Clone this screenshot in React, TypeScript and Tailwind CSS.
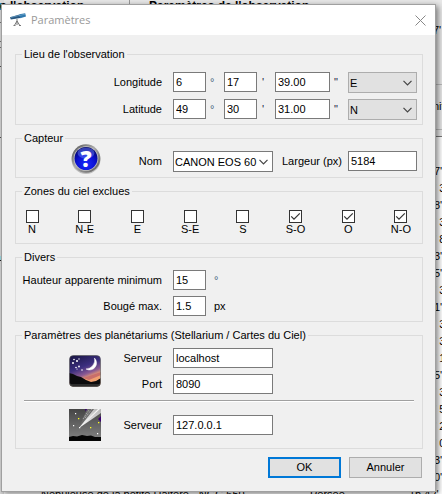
import type { ReactNode } from "react";

const rows = ["7'", "' 3", "8'", "' 3", "' 8", "3'", "5'", "' 3", "1'", "' 3", "' 3", "' 1", "5'", "' 3", "' 5", "' 2", "' 0", "3'", "0'"];

function CatalogueWindow() {
  return (
    <div className="absolute inset-0 overflow-hidden bg-white leading-[17px] whitespace-nowrap" aria-hidden="true">
      <div className="absolute inset-x-0 top-0 h-[137px] border-b border-[#777777] bg-[#e8e8e8]" />
      <div className="absolute top-0 left-0 h-full w-1 bg-[#dcdcdc]" />
      <div className="absolute top-[3px] left-0 h-[7px] w-[2px] bg-[#2f86d0]" />
      <div className="absolute top-[22px] left-0 h-px w-1 bg-[#777777]" />
      <div className="absolute top-[41px] left-0 h-px w-1 bg-[#777777]" />
      <div className="absolute top-[47px] left-0 h-px w-1 bg-[#777777]" />
      <div className="absolute top-[66px] left-0 h-px w-1 bg-[#555555]" />
      <div className="absolute top-[137px] left-0 h-px w-1 bg-[#555555]" />
      <div className="absolute top-[256px] left-0 h-[4px] w-1 bg-[#9fdfe8]" />
      <div className="absolute top-[260px] left-0 h-px w-1 bg-[#222222]" />
      <div className="absolute -top-px left-0 text-[12px] leading-[14px] font-bold">e l'observation</div>
      <div className="absolute top-0 left-[129px] h-1 w-px bg-[#999999]" />
      <div className="absolute -top-px left-[149px] text-[12px] leading-[14px] font-bold">Paramètres de l'observation</div>
      <div className="absolute top-[22px] left-[433px]">7'</div>
      <div className="absolute top-[84px] right-0 h-px w-2 bg-[#bbbbbb]" />
      <div className="absolute top-[98px] left-[433px]">nit</div>
      <div className="absolute top-[129px] right-0 h-px w-2 bg-[#bbbbbb]" />
      <div className="absolute top-[163px] left-[434px]">
        {rows.map((r, i) => (
          <div key={i}>{r}</div>
        ))}
      </div>
      <div className="absolute top-[486px] left-[41px]">Nébuleuse de la petite Haltère - NGC 650</div>
      <div className="absolute top-[486px] left-[310px]">Persée</div>
      <div className="absolute top-[486px] left-[409px]">1h 42'</div>
    </div>
  );
}

function TelescopeIcon() {
  return (
    <svg width="16" height="14" viewBox="0 0 16 14" aria-hidden="true">
      <path d="M0 4.2 9.5 1.6 10.2 5 0.8 6.4z" fill="#27567f" />
      <path d="M9.3 1.2 15.2 0.2 16 3.4 10.2 5.2z" fill="#2f78ad" />
      <path d="M1 4.4 15 1.2" stroke="#6fa8cf" strokeWidth="0.7" />
      <path d="M7 6v3M7 8 4.4 12.5M7 8l2.8 4.5M7 8v4M3.5 12.5h2M9 12.5h2" stroke="#777777" strokeWidth="1" fill="none" />
    </svg>
  );
}

function HelpIcon() {
  return (
    <svg width="32" height="32" viewBox="0 0 32 32" aria-hidden="true">
      <defs>
        <linearGradient id="ring" x1="0" y1="0" x2="1" y2="1">
          <stop offset="0" stopColor="#4c4c4c" />
          <stop offset="0.45" stopColor="#aaaaaa" />
          <stop offset="1" stopColor="#555555" />
        </linearGradient>
        <radialGradient id="ball" cx="0.5" cy="0.75" r="0.75">
          <stop offset="0" stopColor="#1c2cff" />
          <stop offset="0.55" stopColor="#0a10d0" />
          <stop offset="1" stopColor="#02055c" />
        </radialGradient>
      </defs>
      <circle cx="17" cy="16.5" r="14.5" fill="#bdbdbd" />
      <circle cx="17" cy="15.5" r="14.3" fill="url(#ring)" />
      <circle cx="17" cy="15.5" r="12.3" fill="#c4c4c4" />
      <circle cx="17" cy="15.5" r="11.5" fill="url(#ball)" />
      <ellipse cx="17" cy="10" rx="8.5" ry="5.5" fill="#6f86ff" opacity="0.45" />
      <text x="17" y="23.5" textAnchor="middle" fontFamily="Open Sans, sans-serif" fontWeight="800" fontSize="22" fill="#ffffff">?</text>
    </svg>
  );
}

function StellariumIcon() {
  return (
    <svg width="32" height="32" viewBox="0 0 32 32" aria-hidden="true">
      <defs>
        <linearGradient id="dusk" x1="0.2" y1="0" x2="0.6" y2="1">
          <stop offset="0" stopColor="#1b1747" />
          <stop offset="0.4" stopColor="#3c2f80" />
          <stop offset="0.62" stopColor="#8a5a93" />
          <stop offset="0.76" stopColor="#f0a070" />
        </linearGradient>
        <clipPath id="tile"><rect x="0.5" y="0.5" width="31" height="31" rx="4" /></clipPath>
      </defs>
      <g clipPath="url(#tile)">
        <rect width="32" height="32" fill="url(#dusk)" />
        <path d="M14 23 32 17v3L20 25z" fill="#c96f6a" />
        <path d="M0 18 4 19 8 21 12 22 17 25 22 27 27 26 32 23V32H0z" fill="#0b0b0d" />
        <path d="M0 29h32v3H0z" fill="#2b2b2b" />
        <path d="M25.5 3A7 7 0 0 1 17 14A9 9 0 0 0 25.5 3z" fill="#ffffff" stroke="#ffffff" strokeWidth="0.5" />
        <g fill="#ffffff">
          <circle cx="5" cy="4.5" r="0.8" /><circle cx="8" cy="6" r="1" /><circle cx="4" cy="8" r="1" />
          <circle cx="10" cy="4" r="0.7" /><circle cx="7" cy="12.5" r="0.8" /><circle cx="10" cy="11.5" r="0.9" />
          <circle cx="13" cy="15" r="0.8" /><circle cx="8" cy="14" r="0.6" />
        </g>
      </g>
      <rect x="0.5" y="0.5" width="31" height="31" rx="4" fill="none" stroke="#555555" strokeOpacity="0.6" />
    </svg>
  );
}

function CometIcon() {
  return (
    <svg width="32" height="32" viewBox="0 0 32 32" aria-hidden="true">
      <defs>
        <linearGradient id="night" x1="0" y1="0" x2="0" y2="1">
          <stop offset="0" stopColor="#454545" />
          <stop offset="1" stopColor="#858585" />
        </linearGradient>
        <linearGradient id="tail" x1="0" y1="1" x2="1" y2="0">
          <stop offset="0" stopColor="#ffffff" />
          <stop offset="1" stopColor="#b4b4b4" />
        </linearGradient>
      </defs>
      <rect width="32" height="32" fill="url(#night)" />
      <path d="M16 0h3l-2 3zM32 7v6l-3-3z" fill="#3a0070" />
      <path d="M10 19 18 0h7z" fill="#6a6a6a" />
      <path d="M14 10 20 1M16 9 23 0" stroke="#dddddd" strokeWidth="0.7" strokeDasharray="1 1" />
      <path d="M10 19 25 0h7v4z" fill="url(#tail)" />
      <path d="M10 19 29 0h2z" fill="#f5f5f5" />
      <path d="M0 28 4 27 8 27.5 13 26 18 27 22 26.5 26 28 32 28V32H0z" fill="#050505" />
      <path d="M9 9h1.3v1.3H9zM29 13h1.3v1.3H29zM21 18h1.3v1.3H21z" fill="#ffff20" />
      <path d="M6 4h1.2v1.2H6zM4 16h1.2v1.2H4zM28 24h1.2v1.2H28zM10 18h1.3v1.3H10z" fill="#ffffff" />
    </svg>
  );
}

function Group({ title, className, children }: { title: string; className: string; children: ReactNode }) {
  return (
    <fieldset className={`min-w-0 border border-[#dcdcdc] ${className}`}>
      <legend className="ml-[6px] px-[2px] leading-[13px]">{title}</legend>
      {children}
    </fieldset>
  );
}

function TextBox({ id, value, width, label }: { id: string; value: string; width: string; label?: string }) {
  return (
    <input
      id={id}
      type="text"
      defaultValue={value}
      aria-label={label}
      className={`h-5 shrink-0 border border-[#7a7a7a] bg-white px-[2px] outline-none ${width}`}
    />
  );
}

function Combo({ id, value, look, label }: { id: string; value: string; look: string; label?: string }) {
  return (
    <div className={`relative h-[21px] shrink-0 border ${look}`}>
      <select id={id} defaultValue={value} aria-label={label} className="block h-full w-full appearance-none bg-transparent pl-px outline-none">
        <option>{value}</option>
      </select>
      <svg className="pointer-events-none absolute top-[7px] right-1" width="9" height="6" viewBox="0 0 9 6" aria-hidden="true">
        <path d="M0.5 0.8 4.5 4.8 8.5 0.8" fill="none" stroke="#444444" strokeWidth="1.2" />
      </svg>
    </div>
  );
}

function Label({ htmlFor, children }: { htmlFor: string; children: ReactNode }) {
  return (
    <label htmlFor={htmlFor} className="w-[146px] shrink-0 text-right whitespace-nowrap">
      {children}
    </label>
  );
}

function Coordinate({ name, id, deg, min, sec, dir }: { name: string; id: string; deg: string; min: string; sec: string; dir: string }) {
  return (
    <div className="flex h-[21px] items-start leading-5">
      <Label htmlFor={id}>{name}</Label>
      <span className="w-[11px]" />
      <TextBox id={id} value={deg} width="w-[33px]" />
      <span className="w-[18px] pl-1 text-[#44607a]">°</span>
      <TextBox id={`${id}-min`} value={min} width="w-[33px]" label={`${name} minutes`} />
      <span className="w-[18px] pl-[5px] text-[#222244]">'</span>
      <TextBox id={`${id}-sec`} value={sec} width="w-[55px]" label={`${name} secondes`} />
      <span className="w-[18px] pl-1 text-[#222244]">"</span>
      <Combo id={`${id}-dir`} value={dir} label={`${name} direction`} look="w-[69px] border-[#adadad] bg-[#e1e1e1]" />
    </div>
  );
}

function Zone({ name, checked }: { name: string; checked: boolean }) {
  return (
    <label className="flex w-6 flex-col items-center leading-[13px]">
      <span className="relative h-[13px] w-[13px]">
        <input type="checkbox" defaultChecked={checked} className="peer block h-[13px] w-[13px] appearance-none border border-[#333333] bg-white" />
        <svg className="pointer-events-none absolute inset-0 hidden peer-checked:block" width="13" height="13" viewBox="0 0 13 13" aria-hidden="true">
          <path d="M2.2 6.3 5 9.2 10.8 3.3" fill="none" stroke="#333333" strokeWidth="1.2" />
        </svg>
      </span>
      <span className="whitespace-nowrap">{name}</span>
    </label>
  );
}

function PlanetariumFields({ children }: { children: ReactNode }) {
  return <div className="flex flex-col gap-[6px] leading-5">{children}</div>;
}

function ServerField({ id, name, value }: { id: string; name: string; value: string }) {
  return (
    <div className="flex gap-[11px]">
      <label htmlFor={id} className="w-[61px] text-right">{name}</label>
      <TextBox id={id} value={value} width="w-[100px]" />
    </div>
  );
}

export default function App() {
  return (
    <div className="relative overflow-hidden pt-1 pr-[6px] pb-[2px] pl-px font-['Liberation_Sans',sans-serif] text-[11px] text-black">
      <CatalogueWindow />
      <div role="dialog" aria-labelledby="title" className="relative border border-[#a0a0a0] bg-[#f0f0f0] shadow-[2px_2px_6px_rgba(0,0,0,0.5)]">
        <header className="flex h-[30px] items-center bg-white pr-[9px] pl-2">
          <TelescopeIcon />
          <h1 id="title" className="flex-1 pl-[5px] font-['Open_Sans',sans-serif] text-[11px] text-[#999999]">Paramètres</h1>
          <button type="button" aria-label="Fermer">
            <svg width="11" height="11" viewBox="0 0 11 11" aria-hidden="true">
              <path d="M0.5 0.5 10.5 10.5M10.5 0.5 0.5 10.5" stroke="#888888" strokeWidth="1" />
            </svg>
          </button>
        </header>

        <form className="flex flex-col gap-[7px] pt-[13px] pr-3 pb-[13px] pl-[13px]">
          <Group title="Lieu de l'observation" className="pt-[11px] pb-1">
            <div className="flex flex-col gap-[6px]">
              <Coordinate name="Longitude" id="longitude" deg="6" min="17" sec="39.00" dir="E" />
              <Coordinate name="Latitude" id="latitude" deg="49" min="30" sec="31.00" dir="N" />
            </div>
          </Group>

          <Group title="Capteur" className="pt-[6px] pb-[5px]">
            <div className="flex h-[21px] items-start leading-5">
              <span className="-my-2 ml-[53px]"><HelpIcon /></span>
              <label htmlFor="capteur" className="w-[61px] text-right">Nom</label>
              <span className="w-[11px]" />
              <Combo id="capteur" value="CANON EOS 60" look="w-[100px] border-[#7a7a7a] bg-white" />
              <label htmlFor="largeur" className="w-[75px] pl-[9px] whitespace-nowrap">Largeur (px)</label>
              <TextBox id="largeur" value="5184" width="w-[69px]" />
            </div>
          </Group>

          <Group title="Zones du ciel exclues" className="pt-3 pb-[7px]">
            <div className="flex justify-between pr-[9px] pl-1">
              <Zone name="N" checked={false} />
              <Zone name="N-E" checked={false} />
              <Zone name="E" checked={false} />
              <Zone name="S-E" checked={false} />
              <Zone name="S" checked={false} />
              <Zone name="S-O" checked />
              <Zone name="O" checked />
              <Zone name="N-O" checked />
            </div>
          </Group>

          <Group title="Divers" className="pt-[6px] pb-[5px]">
            <div className="flex flex-col gap-[6px] leading-5">
              <div className="flex">
                <Label htmlFor="hauteur">Hauteur apparente minimum</Label>
                <span className="w-[11px]" />
                <TextBox id="hauteur" value="15" width="w-[33px]" />
                <span className="pl-2 text-[#44607a]">°</span>
              </div>
              <div className="flex">
                <Label htmlFor="bouge">Bougé max.</Label>
                <span className="w-[11px]" />
                <TextBox id="bouge" value="1.5" width="w-[33px]" />
                <span className="pl-2">px</span>
              </div>
            </div>
          </Group>

          <Group title="Paramètres des planétariums (Stellarium / Cartes du Ciel)" className="pt-[6px] pb-[13px]">
            <div className="flex items-center pl-[53px]">
              <StellariumIcon />
              <PlanetariumFields>
                <ServerField id="stellarium-serveur" name="Serveur" value="localhost" />
                <ServerField id="stellarium-port" name="Port" value="8090" />
              </PlanetariumFields>
            </div>
            <hr className="mx-2 mt-[6px] mb-[13px] h-[2px] border-t border-b border-t-[#a0a0a0] border-b-white" />
            <div className="flex h-5 items-center pl-[53px]">
              <CometIcon />
              <PlanetariumFields>
                <ServerField id="carte-serveur" name="Serveur" value="127.0.0.1" />
              </PlanetariumFields>
            </div>
          </Group>

          <div className="flex justify-end gap-2 pt-px pr-px">
            <button type="submit" className="h-[21px] w-[73px] border-2 border-[#0078d7] bg-[#e1e1e1]">OK</button>
            <button type="button" className="h-[21px] w-[73px] border border-[#adadad] bg-[#e1e1e1]">Annuler</button>
          </div>
        </form>
      </div>
    </div>
  );
}
